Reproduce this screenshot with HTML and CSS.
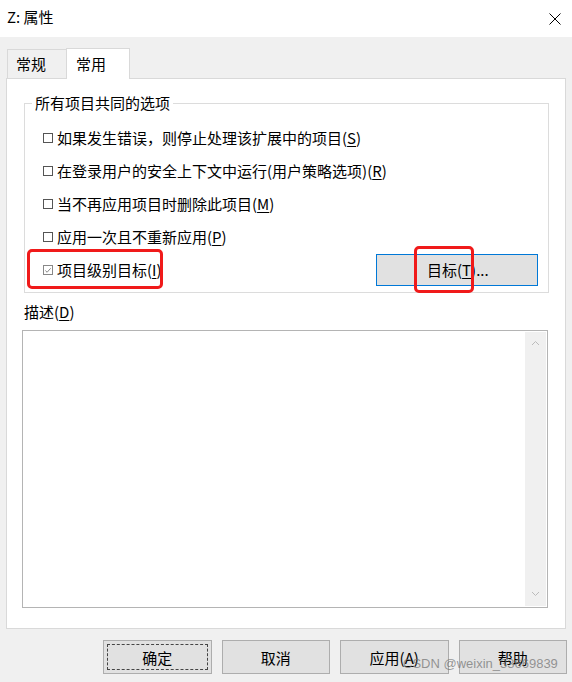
FILE: index.html
```html
<!DOCTYPE html>
<html lang="zh-CN">
<head>
  <meta charset="UTF-8">
  <title>Z: 属性</title>
  <link rel="stylesheet" href="styles.css">
</head>
<body>

  <div class="titlebar">
    <span class="title">Z: 属性</span>
    <svg class="close" width="12" height="12" viewBox="0 0 12 12">
      <path d="M0.5 0.5 L11.5 11.5 M11.5 0.5 L0.5 11.5" stroke="#000" stroke-width="1"/>
    </svg>
  </div>

  <div class="dialog">
    <div class="tabs">
      <div class="tab">常规</div>
      <div class="tab active">常用</div>
    </div>

    <div class="panel">
      <fieldset class="group">
        <legend>所有项目共同的选项</legend>
        <div class="row"><span class="box"></span>如果发生错误，则停止处理该扩展中的项目(<u>S</u>)</div>
        <div class="row"><span class="box"></span>在登录用户的安全上下文中运行(用户策略选项)(<u>R</u>)</div>
        <div class="row"><span class="box"></span>当不再应用项目时删除此项目(<u>M</u>)</div>
        <div class="row"><span class="box"></span>应用一次且不重新应用(<u>P</u>)</div>
        <div class="row">
          <span class="mark mark-left">
            <span class="box checked">
              <svg width="9" height="9" viewBox="0 0 9 9"><path d="M1.5 4.5 L3.5 6.5 L7.5 2" fill="none" stroke="#777" stroke-width="1"/></svg>
            </span>项目级别目标(<u>I</u>)
          </span>
          <button class="target-btn"><span class="mark mark-right"></span>目标(<u>T</u>)...</button>
        </div>
      </fieldset>

      <div class="desc-label">描述(<u>D</u>)</div>
      <div class="desc">
        <div class="scrollbar">
          <svg width="9" height="6" viewBox="0 0 9 6"><path d="M1 5 L4.5 1.5 L8 5" fill="none" stroke="#bbb"/></svg>
          <svg width="9" height="6" viewBox="0 0 9 6"><path d="M1 1 L4.5 4.5 L8 1" fill="none" stroke="#bbb"/></svg>
        </div>
      </div>
    </div>

    <div class="actions">
      <button class="btn default"><span>确定</span></button>
      <button class="btn">取消</button>
      <button class="btn">应用(<u>A</u>)</button>
      <button class="btn">帮助</button>
      <span class="watermark">CSDN @weixin_33669839</span>
    </div>
  </div>

</body>
</html>
```

FILE: styles.css
```css
body {
  margin: 0;
  width: 572px;
  height: 682px;
  font-family: "Noto Sans CJK SC", "Noto Sans", sans-serif;
  font-size: 15px;
  color: #000;
  background: #f0f0f0;
  overflow: hidden;
}
u {
  text-decoration-thickness: 1px;
  text-underline-offset: 2px;
}
.titlebar {
  height: 37px;
  background: #fff;
  display: flex;
  align-items: center;
  justify-content: space-between;
  padding: 0 11px 0 7px;
}
.title {
  font-size: 15px;
  line-height: 20px;
  margin-top: -3px;
}
.dialog {
  padding: 10px 6px 0 6px;
  position: relative;
}
.tabs {
  display: flex;
  align-items: flex-end;
  height: 31px;
  padding-left: 1px;
}
.tab {
  height: 29px;
  line-height: 27px;
  padding: 0 8px;
  border: 1px solid #d9d9d9;
  border-bottom: none;
  background: #f0f0f0;
  box-sizing: border-box;
  width: 60px;
}
.tab.active {
  height: 31px;
  width: 64px;
  margin-left: -1px;
  padding-left: 9px;
  background: #fff;
  position: relative;
  top: 1px;
  line-height: 29px;
}
.panel {
  background: #fff;
  border: 1px solid #d9d9d9;
  height: 551px;
  box-sizing: border-box;
  padding: 13px 16px 0 15px;
}
.group {
  margin: 0 0 0 2px;
  padding: 7px 0 6px 7px;
  border: 1px solid #dcdcdc;
  min-inline-size: 0;
}
.group legend {
  padding: 0 3px;
  line-height: 22px;
}
.row {
  height: 33px;
  display: flex;
  align-items: center;
  padding-left: 11px;
  position: relative;
}
.box {
  display: inline-flex;
  align-items: center;
  justify-content: center;
  width: 10px;
  height: 10px;
  border: 1px solid #555;
  margin-right: 4px;
  margin-top: 1px;
  box-sizing: border-box;
}
.box.checked {
  border-color: #888;
}
.mark {
  display: inline-flex;
  align-items: center;
}
.mark-left::after {
  content: "";
  position: absolute;
  left: -5px;
  top: -4px;
  width: 130px;
  height: 34px;
  border: 3px solid #f01a1a;
  border-radius: 5px;
}
.target-btn {
  margin-left: auto;
  margin-right: 10px;
  width: 162px;
  height: 32px;
  font: inherit;
  color: #000;
  background: #e1e1e1;
  border: 1px solid #0078d7;
  padding: 0 0 0 6px;
  text-align: left;
  text-indent: 44px;
  position: relative;
}
.mark-right {
  position: absolute;
  left: 37px;
  top: -9px;
  width: 54px;
  height: 41px;
  border: 3px solid #f01a1a;
  border-radius: 5px;
}
.desc-label {
  margin-top: 8px;
  line-height: 22px;
  padding-left: 2px;
}
.desc {
  margin-top: 7px;
  width: 526px;
  height: 278px;
  border: 1px solid #b4b4b4;
  box-sizing: border-box;
  display: flex;
  justify-content: flex-end;
  padding: 1px;
}
.scrollbar {
  width: 21px;
  background: #f0f0f0;
  display: flex;
  flex-direction: column;
  justify-content: space-between;
  align-items: center;
  padding: 8px 0 9px;
}
.actions {
  display: flex;
  justify-content: flex-end;
  gap: 10px;
  padding-top: 11px;
  margin-right: -1px;
  position: relative;
}
.btn {
  width: 108.5px;
  height: 34px;
  font: inherit;
  color: #000;
  background: #e1e1e1;
  border: 1px solid #adadad;
  padding: 0;
}
.btn.default {
  padding: 3px;
}
.btn.default span {
  display: flex;
  align-items: center;
  justify-content: center;
  height: 100%;
  border: 1px dashed #444;
  box-sizing: border-box;
}
.watermark {
  position: absolute;
  z-index: 1;
  left: 397px;
  top: 27px;
  white-space: nowrap;
  font-family: "Liberation Sans", Arial, sans-serif;
  font-size: 13px;
  line-height: 16px;
  color: rgba(110, 110, 110, 0.7);
}
```
